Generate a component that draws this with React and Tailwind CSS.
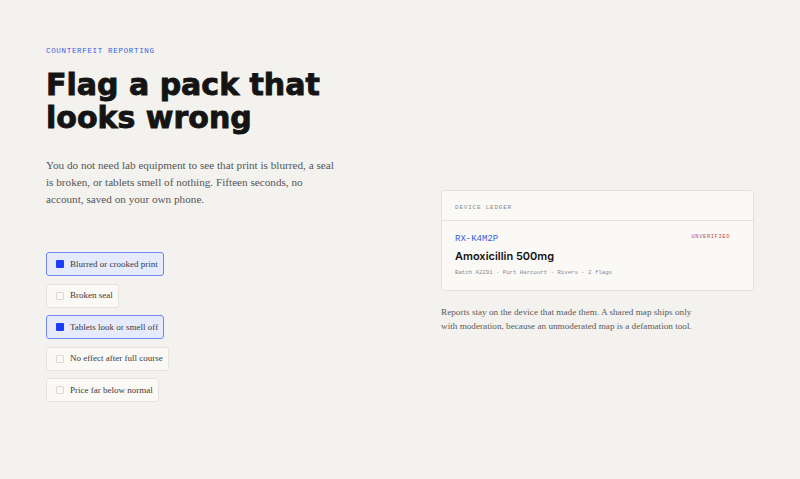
import React, { useState } from 'react';

const SIGNS = [
  { label: 'Blurred or crooked print', on: true },
  { label: 'Broken seal', on: false },
  { label: 'Tablets look or smell off', on: true },
  { label: 'No effect after full course', on: false },
  { label: 'Price far below normal', on: false },
];

const serif = { fontFamily: '"Liberation Serif", "DejaVu Serif", serif' };

function SignToggle({ label, on, onClick }) {
  return (
    <button
      onClick={onClick}
      className={`flex items-center gap-[6px] h-[24px] pl-[9px] pr-[5px] rounded-[3px] border text-[9px] text-[#3a3a3a] ${on ? 'bg-[#e5eafc] border-[#7088ee]' : 'bg-[#faf9f6] border-[#e6e3dc]'}`}
      style={serif}
    >
      <span
        className={`w-[8px] h-[8px] rounded-[1px] ${on ? 'bg-[#1a3dff]' : 'border border-[#dcd9d2] bg-[#faf9f6]'}`}
      />
      {label}
    </button>
  );
}

export default function App() {
  const [signs, setSigns] = useState(SIGNS);

  const toggle = (i) =>
    setSigns((s) => s.map((x, j) => (j === i ? { ...x, on: !x.on } : x)));

  return (
    <div className="min-h-screen bg-[#f3f2ee] px-[46px] pt-[46px] flex">
      {/* Left: pitch + checklist */}
      <div className="w-[330px]">
        <p className="font-['Liberation_Mono',monospace] text-[7.5px] tracking-[0.09em] text-[#3b5ce0]">
          COUNTERFEIT REPORTING
        </p>
        <h1 className="mt-[10.5px] font-['DejaVu_Sans',sans-serif] font-bold text-[30px] leading-[33px] text-[#141414] [-webkit-text-stroke:0.9px_#141414]">
          Flag a pack that
          <br />
          looks wrong
        </h1>
        <p className="mt-[23.5px] max-w-[292px] text-[11.2px] leading-[17px] text-[#555]" style={serif}>
          You do not need lab equipment to see that print is blurred, a seal is broken, or tablets smell of nothing. Fifteen seconds, no account, saved on your own phone.
        </p>
        <div className="mt-[44px] flex flex-col items-start gap-[7.5px]">
          {signs.map((s, i) => (
            <SignToggle key={s.label} label={s.label} on={s.on} onClick={() => toggle(i)} />
          ))}
        </div>
      </div>

      {/* Right: ledger */}
      <div className="ml-auto w-[313px] mt-[144px]">
        <div className="rounded-[4px] border border-[#e4e1db] bg-[#faf9f6]">
          <div className="px-[13px] pt-[3px] h-[30px] flex items-center border-b border-[#e4e1db] font-['Liberation_Mono',monospace] text-[6px] tracking-[0.13em] text-[#888]">
            DEVICE LEDGER
          </div>
          <div className="px-[13px] pt-[12px] pb-[12px]">
            <div className="flex items-start justify-between">
              <span className="font-['Liberation_Mono',monospace] text-[9px] text-[#3b5ce0]">RX-K4M2P</span>
              <span className="mr-[10px] font-['Liberation_Mono',monospace] text-[5.5px] tracking-[0.1em] text-[#c0504d]">
                UNVERIFIED
              </span>
            </div>
            <div className="mt-[1px] font-['Inter',sans-serif] font-semibold text-[11px] text-[#141414]">
              Amoxicillin 500mg
            </div>
            <div className="mt-[5px] font-['Liberation_Mono',monospace] text-[5.7px] text-[#8a8a8a]">
              Batch A2291 · Port Harcourt · Rivers · 2 flags
            </div>
          </div>
        </div>
        <p className="mt-[14px] max-w-[255px] text-[9.2px] leading-[14px] text-[#5a5a5a]" style={serif}>
          Reports stay on the device that made them. A shared map ships only with moderation, because an unmoderated map is a defamation tool.
        </p>
      </div>
    </div>
  );
}
